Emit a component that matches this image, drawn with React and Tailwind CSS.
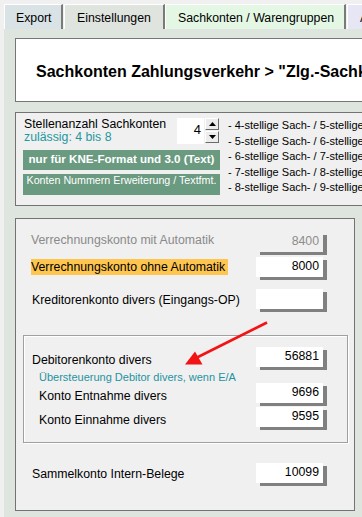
import React from "react";

function Tab({ label, className }) {
  return (
    <div
      className={`h-[25px] shrink-0 whitespace-nowrap border-l border-t border-white border-r-2 border-r-[#7a7a7a] pl-[11px] pt-[6px] leading-[14px] ${className}`}
    >
      {label}
    </div>
  );
}

function Field({ value, disabled }) {
  return (
    <div
      className={`h-[20px] w-[67px] shrink-0 pr-[4px] pt-[2px] text-right leading-[14px] shadow-[4px_3px_0_#808080] ${
        disabled ? "bg-[#f0f0f0] text-[#8c8c8c]" : "bg-white text-black"
      }`}
    >
      {value}
    </div>
  );
}

function Arrow({ up }) {
  return (
    <svg width="7" height="4" viewBox="0 0 7 4">
      {up ? <polygon points="3.5,0 7,4 0,4" fill="#000" /> : <polygon points="0,0 7,0 3.5,4" fill="#000" />}
    </svg>
  );
}

export default function App() {
  const digits = [
    "- 4-stellige Sach- / 5-stellige Personenkonten",
    "- 5-stellige Sach- / 6-stellige Personenkonten",
    "- 6-stellige Sach- / 7-stellige Personenkonten",
    "- 7-stellige Sach- / 8-stellige Personenkonten",
    "- 8-stellige Sach- / 9-stellige Personenkonten",
  ];

  return (
    <div className="h-[517px] w-[362px] overflow-hidden bg-[#f0f0f0] font-['Liberation_Sans',Arial,sans-serif] text-[12.3px] text-black">
      {/* tabs */}
      <div className="flex pl-[4px] pt-[4px]">
        <Tab label="Export" className="w-[59px] bg-[#d9e3e6]" />
        <Tab label="Einstellungen" className="ml-[1px] w-[101px] bg-[#dfe4df] pl-[12px]" />
        <Tab label="Sachkonten / Warengruppen" className="w-[181px] bg-[#e4f7e4] pl-[12px]" />
        <Tab label="Allgemein" className="ml-[1px] w-[100px] bg-[#e6e6f4] pl-[12px]" />
      </div>

      {/* tab page */}
      <div className="ml-[4px] h-[488px] w-[400px] bg-[#dee5de] pl-[11px] pt-[9px]">
        <div className="h-[64px] w-[360px] border border-[#767676] bg-white pl-[20px] pt-[24px]">
          <p className="whitespace-nowrap text-[16px] font-bold leading-[18px]">
            Sachkonten Zahlungsverkehr &gt; "Zlg.-Sachkonten"
          </p>
        </div>

        {/* Stellenanzahl */}
        <div className="mt-[10px] flex w-[360px] border border-[#737373] bg-[#f0f0f0] pb-[9px] pl-[7px] pt-[5px]">
          <div className="w-[197px] shrink-0">
            <div className="flex">
              <div className="w-[154px] pl-[1px] leading-[13px]">
                <p>Stellenanzahl Sachkonten</p>
                <p className="text-[#1f98a0]">zulässig: 4 bis 8</p>
              </div>
              <div className="h-[26px] w-[27px] bg-white pr-[3px] pt-[4px] text-right text-[13px] leading-[16px]">4</div>
              <div className="flex w-[15px] flex-col gap-[1px] pl-[1px]">
                <div className="flex h-[12px] items-center justify-center border border-b-[#6b6b6b] border-l-white border-r-[#6b6b6b] border-t-white bg-[#ececec]">
                  <Arrow up />
                </div>
                <div className="flex h-[12px] items-center justify-center border border-b-[#6b6b6b] border-l-white border-r-[#6b6b6b] border-t-white bg-[#ececec]">
                  <Arrow />
                </div>
              </div>
            </div>
            <div className="mt-[6px] h-[20px] bg-[#6a9a80] text-center text-[11.6px] font-bold leading-[17px] text-white">
              nur für KNE-Format und 3.0 (Text)
            </div>
            <div className="mt-[4px] h-[21px] bg-[#6a9a80] text-center text-[10.7px] leading-[13px] text-white">
              Konten Nummern Erweiterung / Textfmt.
            </div>
          </div>
          <div className="ml-[8px] whitespace-nowrap text-[11px] leading-[15.5px]">
            {digits.map((d) => (
              <p key={d}>{d}</p>
            ))}
          </div>
        </div>

        {/* Konten */}
        <div className="relative mt-[12px] h-[293px] w-[340px] border border-[#737373] bg-[#f0f0f0] pt-[13px]">
          <div className="flex">
            <p className="w-[240px] shrink-0 pl-[15px] pt-[1.5px] leading-[14px] text-[#8a8a8a]">
              Verrechnungskonto mit Automatik
            </p>
            <Field value="8400" disabled />
          </div>

          <div className="mt-[5px] flex">
            <div className="w-[240px] shrink-0 pl-[15px] pt-[2px]">
              <p className="h-[16px] w-[197px] bg-[#fec54f] leading-[16px]">Verrechnungskonto ohne Automatik</p>
            </div>
            <Field value="8000" />
          </div>

          <div className="mt-[12px] flex">
            <p className="w-[240px] shrink-0 pl-[16px] pt-[4.5px] leading-[14px]">Kreditorenkonto divers (Eingangs-OP)</p>
            <Field value="" />
          </div>

          <div className="ml-[7px] mt-[26px] w-[325px] border border-[#a0a0a0] pb-[15px] pt-[11px] shadow-[inset_1px_1px_0_#fff,1px_1px_0_#fff]">
            <div className="flex">
              <p className="w-[232px] shrink-0 pl-[8px] pt-[6.5px] leading-[14px]">Debitorenkonto divers</p>
              <Field value="56881" />
            </div>
            <p className="mt-[4px] h-[12px] whitespace-nowrap pl-[15px] text-[11px] leading-[12px] text-[#1f93a0]">
              Übersteuerung Debitor divers, wenn E/A
            </p>
            <div className="flex">
              <p className="w-[232px] shrink-0 pl-[15px] pt-[6px] leading-[14px]">Konto Entnahme divers</p>
              <Field value="9696" />
            </div>
            <div className="mt-[4px] flex">
              <p className="w-[232px] shrink-0 pl-[15px] pt-[5.5px] leading-[14px]">Konto Einnahme divers</p>
              <Field value="9595" />
            </div>
          </div>

          <div className="mt-[20px] flex">
            <p className="w-[240px] shrink-0 pl-[16px] pt-[4px] leading-[14px]">Sammelkonto Intern-Belege</p>
            <Field value="10099" />
          </div>

          <svg
            className="pointer-events-none absolute left-0 top-0"
            width="340"
            height="293"
            viewBox="16 218 340 293"
          >
            <line x1="267" y1="321.5" x2="196" y2="357" stroke="#f21414" strokeWidth="2.6" />
            <polygon points="185,363.5 195,350.5 202.5,363.5" fill="#f21414" />
          </svg>
        </div>
      </div>
    </div>
  );
}
